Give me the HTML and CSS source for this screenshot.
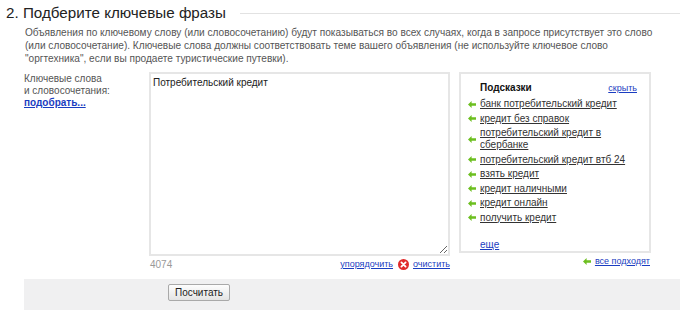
FILE: index.html
```html
<!DOCTYPE html>
<html>
<head>
    <title>Подберите ключевые фразы</title>
    <link rel="stylesheet" href="styles.css">
</head>
<body>
    <div class="section">
        <h2 class="section-title"><span>2. Подберите ключевые фразы</span></h2>
        <p class="intro">Объявления по ключевому слову (или словосочетанию) будут показываться во всех случаях, когда в запросе присутствует это слово (или словосочетание). Ключевые слова должны соответствовать теме вашего объявления (не используйте ключевое слово "оргтехника", если вы продаете туристические путевки).</p>

        <div class="keywords-row">
            <div class="label-col">
                Ключевые слова<br>и словосочетания:<br>
                <a href="#" class="pick-link">подобрать...</a>
            </div>

            <div class="editor">
                <textarea class="phrases">Потребительский кредит</textarea>
                <div class="editor-foot">
                    <span class="count">4074</span>
                    <span class="actions">
                        <a href="#" class="small-link">упорядочить</a>
                        <svg class="clear-icon" width="11" height="11" viewBox="0 0 11 11">
                            <circle cx="5.5" cy="5.5" r="5.5" fill="#e02a2a"/>
                            <path d="M3.4 3.4 L7.6 7.6 M7.6 3.4 L3.4 7.6" stroke="#fff" stroke-width="1.8" stroke-linecap="round"/>
                        </svg>
                        <a href="#" class="small-link">очистить</a>
                    </span>
                </div>
            </div>

            <div class="hints-col">
                <div class="hints">
                    <div class="hints-head">
                        <b>Подсказки</b>
                        <a href="#" class="small-link">скрыть</a>
                    </div>
                    <ul class="hint-list">
                        <li><svg class="arrow" width="8" height="7" viewBox="0 0 8 7"><path d="M0 3.5 L3.6 0 L3.6 2.3 L8 2.3 L8 4.7 L3.6 4.7 L3.6 7 Z"/></svg><a href="#">банк потребительский кредит</a></li>
                        <li><svg class="arrow" width="8" height="7" viewBox="0 0 8 7"><path d="M0 3.5 L3.6 0 L3.6 2.3 L8 2.3 L8 4.7 L3.6 4.7 L3.6 7 Z"/></svg><a href="#">кредит без справок</a></li>
                        <li><svg class="arrow" width="8" height="7" viewBox="0 0 8 7"><path d="M0 3.5 L3.6 0 L3.6 2.3 L8 2.3 L8 4.7 L3.6 4.7 L3.6 7 Z"/></svg><a href="#">потребительский кредит в сбербанке</a></li>
                        <li><svg class="arrow" width="8" height="7" viewBox="0 0 8 7"><path d="M0 3.5 L3.6 0 L3.6 2.3 L8 2.3 L8 4.7 L3.6 4.7 L3.6 7 Z"/></svg><a href="#">потребительский кредит втб 24</a></li>
                        <li><svg class="arrow" width="8" height="7" viewBox="0 0 8 7"><path d="M0 3.5 L3.6 0 L3.6 2.3 L8 2.3 L8 4.7 L3.6 4.7 L3.6 7 Z"/></svg><a href="#">взять кредит</a></li>
                        <li><svg class="arrow" width="8" height="7" viewBox="0 0 8 7"><path d="M0 3.5 L3.6 0 L3.6 2.3 L8 2.3 L8 4.7 L3.6 4.7 L3.6 7 Z"/></svg><a href="#">кредит наличными</a></li>
                        <li><svg class="arrow" width="8" height="7" viewBox="0 0 8 7"><path d="M0 3.5 L3.6 0 L3.6 2.3 L8 2.3 L8 4.7 L3.6 4.7 L3.6 7 Z"/></svg><a href="#">кредит онлайн</a></li>
                        <li><svg class="arrow" width="8" height="7" viewBox="0 0 8 7"><path d="M0 3.5 L3.6 0 L3.6 2.3 L8 2.3 L8 4.7 L3.6 4.7 L3.6 7 Z"/></svg><a href="#">получить кредит</a></li>
                    </ul>
                    <a href="#" class="more-link">еще</a>
                </div>
                <div class="hints-foot">
                    <svg class="arrow" width="8" height="7" viewBox="0 0 8 7"><path d="M0 3.5 L3.6 0 L3.6 2.3 L8 2.3 L8 4.7 L3.6 4.7 L3.6 7 Z"/></svg>
                    <a href="#" class="small-link">все подходят</a>
                </div>
            </div>
        </div>

        <div class="submit-bar">
            <button type="button">Посчитать</button>
        </div>
    </div>
</body>
</html>
```

FILE: styles.css
```css
body {
    margin: 0;
    font-family: 'Liberation Sans', Arial, sans-serif;
    font-size: 10px;
    color: #333;
    background: #fff;
}

.section {
    padding-top: 3px;
}

.section-title {
    display: flex;
    align-items: center;
    margin: 0 0 0 6px;
    font-size: 15.2px;
    font-weight: normal;
    line-height: 20px;
    color: #222;
}

.section-title::after {
    content: '';
    flex: 1;
    height: 1px;
    margin-left: 14px;
    background: #e2e2e2;
}

.intro {
    margin: 3px 20px 0 25px;
    font-size: 10.1px;
    line-height: 13px;
    color: #555;
}

.keywords-row {
    display: flex;
    margin-top: 7px;
    padding-left: 24px;
}

.label-col {
    width: 125px;
    line-height: 12px;
    color: #555;
    padding-top: 1px;
}

.pick-link {
    color: #1a3dc1;
    font-weight: bold;
}

.editor {
    width: 301px;
}

.phrases {
    display: block;
    box-sizing: border-box;
    width: 301px;
    height: 184px;
    margin: 0;
    padding: 3px 2px;
    border: 2px solid #e6e6e6;
    font-family: 'Liberation Sans', Arial, sans-serif;
    font-size: 10px;
    color: #222;
}

.editor-foot {
    display: flex;
    justify-content: space-between;
    align-items: center;
    height: 14px;
    margin-top: 1px;
}

.count {
    color: #999;
    padding-left: 1px;
}

.actions {
    display: flex;
    align-items: center;
    gap: 4px;
}

.small-link {
    font-size: 9px;
    color: #1a3dc1;
}

.clear-icon {
    margin-left: 1px;
}

.hints-col {
    width: 192px;
    margin-left: 9px;
}

.hints {
    box-sizing: border-box;
    height: 181px;
    padding: 8px 12px 0 7px;
    border: 2px solid #e6e6e6;
}

.hints-head {
    display: flex;
    justify-content: space-between;
    align-items: center;
    line-height: 12px;
    padding-left: 12px;
    margin-bottom: 4px;
}

.hints-head b {
    color: #111;
}

.hint-list {
    list-style: none;
    margin: 0;
    padding: 0;
}

.hint-list li {
    display: flex;
    align-items: center;
    margin-bottom: 2.5px;
    line-height: 12px;
}

.hint-list a {
    color: #333;
}

.arrow {
    flex: none;
    margin-right: 4px;
    fill: #6cbf1f;
}

.more-link {
    display: inline-block;
    margin: 13px 0 0 12px;
    color: #1a3dc1;
}

.hints-foot {
    display: flex;
    justify-content: flex-end;
    align-items: center;
    margin-top: 3px;
    padding-right: 1px;
}

.hints-foot .arrow {
    margin-right: 4px;
}

.submit-bar {
    box-sizing: border-box;
    height: 31px;
    margin: 8px 0 0 24px;
    padding: 5px 0 0 144px;
    background: #f0f0f1;
}

.submit-bar button {
    height: 17px;
    padding: 0 6px;
    font-family: 'Liberation Sans', Arial, sans-serif;
    font-size: 10px;
    color: #222;
    border: 1px solid #a9a9a9;
    border-radius: 2px;
    background: linear-gradient(#fdfdfd, #e4e4e4);
}
```
